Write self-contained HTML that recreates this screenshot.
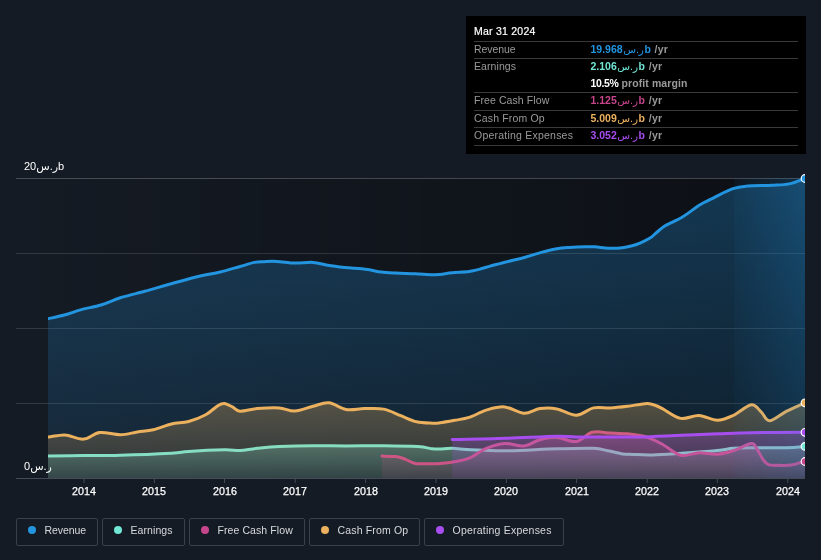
<!DOCTYPE html>
<html><head><meta charset="utf-8"><title>Earnings and Revenue History</title>
<style>
html,body{margin:0;padding:0;background:#151b24;}
body{width:821px;height:560px;position:relative;overflow:hidden;font-family:"Liberation Sans","DejaVu Sans",sans-serif;color:#fff;}
.tt,.lg,.ylab,.yr{will-change:transform;}
.yr{position:absolute;top:483.5px;width:40px;margin-left:-20px;text-align:center;font-size:10.7px;line-height:14px;color:#fff;-webkit-text-stroke:0.25px #fff;}
svg text{font-family:"Liberation Sans","DejaVu Sans",sans-serif;}
.ylab{position:absolute;left:24px;font-size:11px;color:#fff;line-height:12px;white-space:nowrap;}
.lg{position:absolute;top:518px;height:28px;border:1px solid #3a414d;border-radius:2px;box-sizing:border-box;font-size:10.5px;color:#d8dade;white-space:nowrap;}
.lg i{position:absolute;left:11px;top:7px;width:8px;height:8px;border-radius:50%;}
.lg span{position:absolute;left:27.5px;top:2.6px;line-height:16px;}
.tt{position:absolute;left:466px;top:16px;width:340px;height:137.5px;background:#000;font-size:10.5px;}
.tdate{position:absolute;left:8px;top:7.3px;line-height:16px;color:#fff;-webkit-text-stroke:0.2px #fff;}
.sep{position:absolute;left:8px;width:324px;height:1px;background:#3a3a3a;}
.lab{position:absolute;left:8px;line-height:16px;color:#9a9a9a;}
.val{position:absolute;left:124.5px;line-height:16px;white-space:nowrap;font-size:10.5px;}
.val b{font-weight:700}
.u{color:#9a9a9a;font-weight:700;margin-left:0.8px;letter-spacing:0.25px}
.pm{margin-left:0;letter-spacing:0.1px}
.ar{font-weight:400;margin:0 0.5px;}
</style></head><body>
<svg width="821" height="560" viewBox="0 0 821 560" style="position:absolute;left:0;top:0">
<defs>
<clipPath id="cp"><rect x="48" y="160" width="757" height="320"/></clipPath>
<linearGradient id="dark" x1="0" x2="1" y1="0" y2="0"><stop offset="0" stop-color="#000" stop-opacity="0"/><stop offset="1" stop-color="#000" stop-opacity="0.42"/></linearGradient>
<linearGradient id="grev" x1="0" x2="0" y1="0" y2="1"><stop offset="0" stop-color="#2394df" stop-opacity="0.3"/><stop offset="1" stop-color="#2394df" stop-opacity="0.1"/></linearGradient><linearGradient id="gear" x1="0" x2="0" y1="0" y2="1"><stop offset="0" stop-color="#71e7d6" stop-opacity="0.3"/><stop offset="1" stop-color="#71e7d6" stop-opacity="0.1"/></linearGradient><linearGradient id="gfcf" x1="0" x2="0" y1="0" y2="1"><stop offset="0" stop-color="#c7458c" stop-opacity="0.3"/><stop offset="1" stop-color="#c7458c" stop-opacity="0.1"/></linearGradient><linearGradient id="gcfo" x1="0" x2="0" y1="0" y2="1"><stop offset="0" stop-color="#ecb15e" stop-opacity="0.3"/><stop offset="1" stop-color="#ecb15e" stop-opacity="0.1"/></linearGradient><linearGradient id="gopx" x1="0" x2="0" y1="0" y2="1"><stop offset="0" stop-color="#a84df0" stop-opacity="0.3"/><stop offset="1" stop-color="#a84df0" stop-opacity="0.1"/></linearGradient>
<linearGradient id="hl" x1="734" x2="805" y1="0" y2="0" gradientUnits="userSpaceOnUse"><stop offset="0" stop-color="#2394df" stop-opacity="0.05"/><stop offset="1" stop-color="#2394df" stop-opacity="0.24"/></linearGradient>
<linearGradient id="hlm" x1="0" x2="0" y1="178" y2="478" gradientUnits="userSpaceOnUse"><stop offset="0" stop-color="#fff" stop-opacity="1"/><stop offset="1" stop-color="#fff" stop-opacity="0.6"/></linearGradient>
<mask id="hlmask"><rect x="734" y="178" width="71" height="300" fill="url(#hlm)"/></mask>
</defs>
<rect x="16" y="178" width="789" height="300" fill="url(#dark)"/>
<line x1="16" x2="805" y1="178.5" y2="178.5" stroke="#fff" stroke-opacity="0.22" stroke-width="1"/>
<line x1="16" x2="805" y1="253.5" y2="253.5" stroke="#fff" stroke-opacity="0.13" stroke-width="1"/>
<line x1="16" x2="805" y1="328.5" y2="328.5" stroke="#fff" stroke-opacity="0.13" stroke-width="1"/>
<line x1="16" x2="805" y1="403.5" y2="403.5" stroke="#fff" stroke-opacity="0.13" stroke-width="1"/>
<g clip-path="url(#cp)">
<path d="M48.0,318.7C50.7,318.1 58.8,316.5 64.4,315.0C70.0,313.5 75.3,311.3 81.4,309.6C87.5,307.9 94.5,307.0 101.0,305.0C107.5,303.0 113.1,300.1 120.4,297.8C127.7,295.5 137.1,293.4 144.8,291.3C152.5,289.2 159.0,287.2 166.7,285.0C174.4,282.8 184.6,279.9 191.0,278.2C197.4,276.5 200.1,276.0 205.0,275.0C209.9,274.0 214.5,273.4 220.3,272.0C226.1,270.6 234.3,268.1 240.0,266.5C245.7,264.9 250.5,263.2 254.6,262.4C258.7,261.6 260.8,261.9 264.4,261.7C268.0,261.5 271.4,261.2 276.5,261.4C281.6,261.6 288.7,262.9 294.8,263.1C300.9,263.3 307.5,262.0 313.0,262.4C318.5,262.8 322.4,264.4 327.7,265.3C333.0,266.2 339.0,266.9 344.7,267.5C350.4,268.1 357.3,268.2 361.8,268.7C366.3,269.1 368.2,269.6 371.5,270.2C374.8,270.8 377.2,271.6 381.3,272.1C385.4,272.6 390.2,272.8 395.9,273.1C401.6,273.4 409.3,273.5 415.4,273.8C421.5,274.1 428.3,274.7 432.4,274.8C436.5,274.9 436.7,274.7 440.0,274.4C443.3,274.1 447.3,273.3 452.2,272.8C457.1,272.3 464.7,272.0 469.2,271.4C473.7,270.8 474.5,270.5 479.0,269.4C483.5,268.2 490.3,266.0 496.0,264.5C501.7,263.0 508.2,261.4 513.1,260.2C518.0,259.0 520.4,258.6 525.3,257.2C530.2,255.8 537.0,253.5 542.3,252.1C547.6,250.7 552.4,249.5 556.9,248.7C561.4,247.9 564.2,247.8 569.1,247.5C574.0,247.2 581.9,246.9 586.2,246.8C590.5,246.7 591.1,246.6 594.7,246.8C598.4,247.0 603.8,248.0 608.1,248.2C612.4,248.4 616.4,248.4 620.3,248.0C624.2,247.6 628.0,246.8 631.2,246.0C634.5,245.2 636.9,244.4 640.0,243.1C643.1,241.8 647.3,239.8 650.0,238.1C652.7,236.4 653.7,234.9 656.0,233.0C658.3,231.1 661.3,228.4 664.0,226.6C666.7,224.8 669.1,223.9 672.0,222.4C674.9,220.9 678.2,219.5 681.2,217.8C684.2,216.0 686.9,214.1 690.0,211.9C693.1,209.7 696.1,207.1 700.0,204.8C703.9,202.4 708.1,200.5 713.6,197.8C719.1,195.1 727.3,190.6 733.0,188.7C738.7,186.8 741.2,186.7 747.7,186.1C754.2,185.5 765.1,185.7 772.0,185.3C778.9,184.9 783.6,185.0 789.1,183.9C794.6,182.8 802.4,179.4 805.0,178.5L805.0,478L48.0,478Z" fill="url(#grev)"/>
<path d="M48.0,318.7C50.7,318.1 58.8,316.5 64.4,315.0C70.0,313.5 75.3,311.3 81.4,309.6C87.5,307.9 94.5,307.0 101.0,305.0C107.5,303.0 113.1,300.1 120.4,297.8C127.7,295.5 137.1,293.4 144.8,291.3C152.5,289.2 159.0,287.2 166.7,285.0C174.4,282.8 184.6,279.9 191.0,278.2C197.4,276.5 200.1,276.0 205.0,275.0C209.9,274.0 214.5,273.4 220.3,272.0C226.1,270.6 234.3,268.1 240.0,266.5C245.7,264.9 250.5,263.2 254.6,262.4C258.7,261.6 260.8,261.9 264.4,261.7C268.0,261.5 271.4,261.2 276.5,261.4C281.6,261.6 288.7,262.9 294.8,263.1C300.9,263.3 307.5,262.0 313.0,262.4C318.5,262.8 322.4,264.4 327.7,265.3C333.0,266.2 339.0,266.9 344.7,267.5C350.4,268.1 357.3,268.2 361.8,268.7C366.3,269.1 368.2,269.6 371.5,270.2C374.8,270.8 377.2,271.6 381.3,272.1C385.4,272.6 390.2,272.8 395.9,273.1C401.6,273.4 409.3,273.5 415.4,273.8C421.5,274.1 428.3,274.7 432.4,274.8C436.5,274.9 436.7,274.7 440.0,274.4C443.3,274.1 447.3,273.3 452.2,272.8C457.1,272.3 464.7,272.0 469.2,271.4C473.7,270.8 474.5,270.5 479.0,269.4C483.5,268.2 490.3,266.0 496.0,264.5C501.7,263.0 508.2,261.4 513.1,260.2C518.0,259.0 520.4,258.6 525.3,257.2C530.2,255.8 537.0,253.5 542.3,252.1C547.6,250.7 552.4,249.5 556.9,248.7C561.4,247.9 564.2,247.8 569.1,247.5C574.0,247.2 581.9,246.9 586.2,246.8C590.5,246.7 591.1,246.6 594.7,246.8C598.4,247.0 603.8,248.0 608.1,248.2C612.4,248.4 616.4,248.4 620.3,248.0C624.2,247.6 628.0,246.8 631.2,246.0C634.5,245.2 636.9,244.4 640.0,243.1C643.1,241.8 647.3,239.8 650.0,238.1C652.7,236.4 653.7,234.9 656.0,233.0C658.3,231.1 661.3,228.4 664.0,226.6C666.7,224.8 669.1,223.9 672.0,222.4C674.9,220.9 678.2,219.5 681.2,217.8C684.2,216.0 686.9,214.1 690.0,211.9C693.1,209.7 696.1,207.1 700.0,204.8C703.9,202.4 708.1,200.5 713.6,197.8C719.1,195.1 727.3,190.6 733.0,188.7C738.7,186.8 741.2,186.7 747.7,186.1C754.2,185.5 765.1,185.7 772.0,185.3C778.9,184.9 783.6,185.0 789.1,183.9C794.6,182.8 802.4,179.4 805.0,178.5" fill="none" stroke="#2394df" stroke-width="3" stroke-linejoin="round" stroke-linecap="round"/>
<path d="M48.0,456.1C54.0,456.0 71.7,455.8 83.8,455.6C95.9,455.5 105.8,455.6 120.4,455.2C135.0,454.8 160.1,453.8 171.5,453.2C182.9,452.6 179.8,452.1 188.6,451.5C197.4,450.9 215.8,450.0 224.4,449.8C233.0,449.6 234.6,450.8 240.0,450.5C245.4,450.2 250.5,448.9 257.0,448.3C263.5,447.7 269.7,447.0 279.0,446.6C288.3,446.2 301.8,445.8 313.0,445.7C324.2,445.6 334.2,445.9 346.0,445.9C357.8,445.9 371.7,445.6 383.7,445.7C395.7,445.8 409.7,446.1 417.8,446.6C425.9,447.1 428.7,448.4 432.4,448.8C436.1,449.2 436.7,449.1 440.0,449.0C443.3,448.9 446.9,448.2 452.2,448.3C457.5,448.4 462.8,449.4 471.7,449.8C480.6,450.2 491.6,451.0 505.8,450.8C520.0,450.6 542.3,449.2 556.9,448.8C571.5,448.4 585.0,448.0 593.5,448.3C602.0,448.6 603.1,449.9 608.0,450.8C612.9,451.7 618.5,453.3 622.7,453.9C626.9,454.5 628.2,454.2 633.2,454.4C638.2,454.6 644.6,455.1 652.7,454.9C660.8,454.7 671.1,453.9 681.9,453.2C692.6,452.5 708.7,451.3 717.2,450.5C725.7,449.7 727.4,448.8 733.1,448.3C738.8,447.9 742.4,447.9 751.3,447.8C760.2,447.7 777.8,448.0 786.7,447.8C795.7,447.6 802.0,446.6 805.0,446.4L805.0,478L48.0,478Z" fill="url(#gear)"/>
<path d="M48.0,456.1C54.0,456.0 71.7,455.8 83.8,455.6C95.9,455.5 105.8,455.6 120.4,455.2C135.0,454.8 160.1,453.8 171.5,453.2C182.9,452.6 179.8,452.1 188.6,451.5C197.4,450.9 215.8,450.0 224.4,449.8C233.0,449.6 234.6,450.8 240.0,450.5C245.4,450.2 250.5,448.9 257.0,448.3C263.5,447.7 269.7,447.0 279.0,446.6C288.3,446.2 301.8,445.8 313.0,445.7C324.2,445.6 334.2,445.9 346.0,445.9C357.8,445.9 371.7,445.6 383.7,445.7C395.7,445.8 409.7,446.1 417.8,446.6C425.9,447.1 428.7,448.4 432.4,448.8C436.1,449.2 436.7,449.1 440.0,449.0C443.3,448.9 446.9,448.2 452.2,448.3C457.5,448.4 462.8,449.4 471.7,449.8C480.6,450.2 491.6,451.0 505.8,450.8C520.0,450.6 542.3,449.2 556.9,448.8C571.5,448.4 585.0,448.0 593.5,448.3C602.0,448.6 603.1,449.9 608.0,450.8C612.9,451.7 618.5,453.3 622.7,453.9C626.9,454.5 628.2,454.2 633.2,454.4C638.2,454.6 644.6,455.1 652.7,454.9C660.8,454.7 671.1,453.9 681.9,453.2C692.6,452.5 708.7,451.3 717.2,450.5C725.7,449.7 727.4,448.8 733.1,448.3C738.8,447.9 742.4,447.9 751.3,447.8C760.2,447.7 777.8,448.0 786.7,447.8C795.7,447.6 802.0,446.6 805.0,446.4" fill="none" stroke="#71e7d6" stroke-width="3" stroke-linejoin="round" stroke-linecap="round"/>
<path d="M382.0,456.1C384.3,456.2 392.0,456.1 395.9,456.6C399.8,457.1 402.4,458.2 405.6,459.3C408.9,460.4 410.9,462.7 415.4,463.4C419.9,464.1 428.3,463.7 432.4,463.7C436.5,463.7 436.3,463.8 440.0,463.5C443.7,463.2 449.7,462.6 454.6,461.7C459.5,460.8 463.9,460.3 469.2,458.1C474.5,455.9 480.4,450.8 486.3,448.3C492.2,445.9 498.3,443.8 504.6,443.4C510.9,443.0 518.1,446.6 524.0,446.0C529.9,445.4 534.4,441.2 539.9,439.8C545.4,438.4 550.8,437.1 556.9,437.4C563.0,437.7 570.5,442.4 576.4,441.5C582.3,440.6 586.5,433.7 592.2,432.3C597.9,430.9 604.6,432.8 610.5,433.0C616.4,433.2 622.7,433.3 627.6,433.7C632.5,434.1 636.6,434.8 640.0,435.4C643.4,436.0 644.1,435.9 647.8,437.4C651.5,438.9 656.9,441.2 662.4,444.2C667.9,447.2 674.6,453.8 680.7,455.2C686.8,456.6 692.9,452.9 699.0,452.7C705.1,452.5 711.5,454.5 717.2,454.2C722.9,453.9 727.4,452.6 733.1,450.8C738.8,449.0 747.3,443.8 751.3,443.5C755.3,443.2 755.0,446.3 757.0,449.0C759.0,451.7 761.1,456.9 763.0,459.5C764.9,462.1 766.0,463.6 768.5,464.6C771.0,465.6 774.2,465.2 778.0,465.3C781.8,465.4 786.5,465.7 791.0,465.0C795.5,464.3 802.7,461.9 805.0,461.3L805.0,478L382.0,478Z" fill="url(#gfcf)"/>
<path d="M382.0,456.1C384.3,456.2 392.0,456.1 395.9,456.6C399.8,457.1 402.4,458.2 405.6,459.3C408.9,460.4 410.9,462.7 415.4,463.4C419.9,464.1 428.3,463.7 432.4,463.7C436.5,463.7 436.3,463.8 440.0,463.5C443.7,463.2 449.7,462.6 454.6,461.7C459.5,460.8 463.9,460.3 469.2,458.1C474.5,455.9 480.4,450.8 486.3,448.3C492.2,445.9 498.3,443.8 504.6,443.4C510.9,443.0 518.1,446.6 524.0,446.0C529.9,445.4 534.4,441.2 539.9,439.8C545.4,438.4 550.8,437.1 556.9,437.4C563.0,437.7 570.5,442.4 576.4,441.5C582.3,440.6 586.5,433.7 592.2,432.3C597.9,430.9 604.6,432.8 610.5,433.0C616.4,433.2 622.7,433.3 627.6,433.7C632.5,434.1 636.6,434.8 640.0,435.4C643.4,436.0 644.1,435.9 647.8,437.4C651.5,438.9 656.9,441.2 662.4,444.2C667.9,447.2 674.6,453.8 680.7,455.2C686.8,456.6 692.9,452.9 699.0,452.7C705.1,452.5 711.5,454.5 717.2,454.2C722.9,453.9 727.4,452.6 733.1,450.8C738.8,449.0 747.3,443.8 751.3,443.5C755.3,443.2 755.0,446.3 757.0,449.0C759.0,451.7 761.1,456.9 763.0,459.5C764.9,462.1 766.0,463.6 768.5,464.6C771.0,465.6 774.2,465.2 778.0,465.3C781.8,465.4 786.5,465.7 791.0,465.0C795.5,464.3 802.7,461.9 805.0,461.3" fill="none" stroke="#c7458c" stroke-width="3" stroke-linejoin="round" stroke-linecap="round"/>
<path d="M48.0,437.1C49.5,436.9 53.9,436.0 57.0,435.7C60.1,435.4 62.3,434.6 66.8,435.2C71.3,435.8 78.3,439.6 83.8,439.1C89.3,438.7 93.6,433.2 99.7,432.5C105.8,431.8 114.1,434.8 120.4,434.7C126.7,434.6 131.9,432.8 137.4,432.0C142.9,431.2 147.6,431.1 153.3,429.8C159.0,428.5 165.6,425.4 171.5,424.0C177.4,422.6 182.9,423.1 188.6,421.5C194.3,419.9 200.8,417.3 205.7,414.7C210.6,412.1 214.7,407.6 217.8,405.7C220.9,403.8 222.0,403.3 224.4,403.5C226.8,403.7 229.8,405.6 232.4,406.9C235.0,408.2 235.9,410.9 240.0,411.2C244.1,411.5 250.5,409.2 257.0,408.6C263.5,408.1 272.7,407.5 279.0,407.9C285.3,408.3 289.1,411.4 294.8,411.1C300.5,410.8 307.4,407.6 313.1,406.2C318.8,404.8 323.4,402.3 328.9,402.8C334.4,403.3 340.1,408.4 346.0,409.4C351.9,410.4 357.9,408.7 364.2,408.6C370.5,408.6 377.6,407.9 383.7,409.1C389.8,410.3 395.3,413.6 400.8,415.7C406.3,417.8 411.3,420.6 416.6,421.8C421.9,423.1 428.5,423.0 432.4,423.2C436.3,423.4 436.3,423.3 440.0,422.8C443.7,422.3 449.7,421.2 454.6,420.3C459.5,419.4 463.9,419.1 469.2,417.4C474.5,415.7 480.4,411.9 486.3,410.1C492.2,408.4 498.3,406.4 504.6,406.9C510.9,407.4 518.1,413.0 524.0,413.3C529.9,413.6 534.4,409.3 539.9,408.6C545.4,407.9 550.8,407.8 556.9,408.9C563.0,410.0 570.3,415.4 576.4,415.2C582.5,415.0 587.8,409.1 593.5,407.9C599.2,406.7 604.8,408.2 610.5,407.9C616.2,407.6 622.7,406.8 627.6,406.2C632.5,405.6 636.7,404.8 640.0,404.4C643.3,404.0 645.0,403.5 647.5,403.6C650.0,403.8 652.5,404.5 655.0,405.3C657.5,406.1 658.1,406.4 662.4,408.6C666.7,410.8 674.6,417.2 680.7,418.4C686.8,419.5 692.9,415.2 699.0,415.5C705.1,415.8 711.5,420.3 717.2,420.3C722.9,420.3 727.4,418.1 733.1,415.5C738.8,412.9 746.6,405.4 751.3,404.8C756.0,404.2 758.0,409.1 761.1,411.8C764.2,414.5 765.3,420.9 769.6,420.8C773.9,420.7 780.8,414.1 786.7,411.1C792.6,408.1 802.0,404.2 805.0,402.8L805.0,478L48.0,478Z" fill="url(#gcfo)"/>
<path d="M48.0,437.1C49.5,436.9 53.9,436.0 57.0,435.7C60.1,435.4 62.3,434.6 66.8,435.2C71.3,435.8 78.3,439.6 83.8,439.1C89.3,438.7 93.6,433.2 99.7,432.5C105.8,431.8 114.1,434.8 120.4,434.7C126.7,434.6 131.9,432.8 137.4,432.0C142.9,431.2 147.6,431.1 153.3,429.8C159.0,428.5 165.6,425.4 171.5,424.0C177.4,422.6 182.9,423.1 188.6,421.5C194.3,419.9 200.8,417.3 205.7,414.7C210.6,412.1 214.7,407.6 217.8,405.7C220.9,403.8 222.0,403.3 224.4,403.5C226.8,403.7 229.8,405.6 232.4,406.9C235.0,408.2 235.9,410.9 240.0,411.2C244.1,411.5 250.5,409.2 257.0,408.6C263.5,408.1 272.7,407.5 279.0,407.9C285.3,408.3 289.1,411.4 294.8,411.1C300.5,410.8 307.4,407.6 313.1,406.2C318.8,404.8 323.4,402.3 328.9,402.8C334.4,403.3 340.1,408.4 346.0,409.4C351.9,410.4 357.9,408.7 364.2,408.6C370.5,408.6 377.6,407.9 383.7,409.1C389.8,410.3 395.3,413.6 400.8,415.7C406.3,417.8 411.3,420.6 416.6,421.8C421.9,423.1 428.5,423.0 432.4,423.2C436.3,423.4 436.3,423.3 440.0,422.8C443.7,422.3 449.7,421.2 454.6,420.3C459.5,419.4 463.9,419.1 469.2,417.4C474.5,415.7 480.4,411.9 486.3,410.1C492.2,408.4 498.3,406.4 504.6,406.9C510.9,407.4 518.1,413.0 524.0,413.3C529.9,413.6 534.4,409.3 539.9,408.6C545.4,407.9 550.8,407.8 556.9,408.9C563.0,410.0 570.3,415.4 576.4,415.2C582.5,415.0 587.8,409.1 593.5,407.9C599.2,406.7 604.8,408.2 610.5,407.9C616.2,407.6 622.7,406.8 627.6,406.2C632.5,405.6 636.7,404.8 640.0,404.4C643.3,404.0 645.0,403.5 647.5,403.6C650.0,403.8 652.5,404.5 655.0,405.3C657.5,406.1 658.1,406.4 662.4,408.6C666.7,410.8 674.6,417.2 680.7,418.4C686.8,419.5 692.9,415.2 699.0,415.5C705.1,415.8 711.5,420.3 717.2,420.3C722.9,420.3 727.4,418.1 733.1,415.5C738.8,412.9 746.6,405.4 751.3,404.8C756.0,404.2 758.0,409.1 761.1,411.8C764.2,414.5 765.3,420.9 769.6,420.8C773.9,420.7 780.8,414.1 786.7,411.1C792.6,408.1 802.0,404.2 805.0,402.8" fill="none" stroke="#ecb15e" stroke-width="3" stroke-linejoin="round" stroke-linecap="round"/>
<path d="M452.2,439.6C461.1,439.4 488.4,438.9 505.8,438.3C523.2,437.7 545.1,436.4 556.9,436.2C568.7,436.0 567.5,436.8 576.4,436.9C585.3,437.0 599.9,437.1 610.5,437.1C621.1,437.1 628.1,437.2 640.0,436.9C651.9,436.6 668.8,435.7 681.9,435.2C695.0,434.7 706.8,434.1 718.4,433.7C730.0,433.3 736.9,432.9 751.3,432.7C765.7,432.5 796.0,432.4 805.0,432.3L805.0,478L452.2,478Z" fill="url(#gopx)"/>
<path d="M452.2,439.6C461.1,439.4 488.4,438.9 505.8,438.3C523.2,437.7 545.1,436.4 556.9,436.2C568.7,436.0 567.5,436.8 576.4,436.9C585.3,437.0 599.9,437.1 610.5,437.1C621.1,437.1 628.1,437.2 640.0,436.9C651.9,436.6 668.8,435.7 681.9,435.2C695.0,434.7 706.8,434.1 718.4,433.7C730.0,433.3 736.9,432.9 751.3,432.7C765.7,432.5 796.0,432.4 805.0,432.3" fill="none" stroke="#a84df0" stroke-width="3" stroke-linejoin="round" stroke-linecap="round"/>
<rect x="734" y="178" width="71" height="300" fill="url(#hl)" mask="url(#hlmask)"/>
<circle cx="805" cy="178.5" r="3.8" fill="#2394df" stroke="#fff" stroke-width="1.2"/>
<circle cx="805" cy="402.8" r="3.8" fill="#ecb15e" stroke="#fff" stroke-width="1.2"/>
<circle cx="805" cy="432.3" r="3.8" fill="#a84df0" stroke="#fff" stroke-width="1.2"/>
<circle cx="805" cy="446.4" r="3.8" fill="#71e7d6" stroke="#fff" stroke-width="1.2"/>
<circle cx="805" cy="461.5" r="3.8" fill="#c7458c" stroke="#fff" stroke-width="1.2"/>
</g>
<line x1="16" x2="805" y1="478.5" y2="478.5" stroke="#454c58" stroke-width="1"/>
<line x1="84" x2="84" y1="478" y2="483" stroke="#454c58" stroke-width="1"/>
<line x1="154.4" x2="154.4" y1="478" y2="483" stroke="#454c58" stroke-width="1"/>
<line x1="224.5" x2="224.5" y1="478" y2="483" stroke="#454c58" stroke-width="1"/>
<line x1="295.2" x2="295.2" y1="478" y2="483" stroke="#454c58" stroke-width="1"/>
<line x1="365.6" x2="365.6" y1="478" y2="483" stroke="#454c58" stroke-width="1"/>
<line x1="436" x2="436" y1="478" y2="483" stroke="#454c58" stroke-width="1"/>
<line x1="506.4" x2="506.4" y1="478" y2="483" stroke="#454c58" stroke-width="1"/>
<line x1="576.6" x2="576.6" y1="478" y2="483" stroke="#454c58" stroke-width="1"/>
<line x1="647.2" x2="647.2" y1="478" y2="483" stroke="#454c58" stroke-width="1"/>
<line x1="717.3" x2="717.3" y1="478" y2="483" stroke="#454c58" stroke-width="1"/>
<line x1="787.8" x2="787.8" y1="478" y2="483" stroke="#454c58" stroke-width="1"/>
</svg>
<div class="ylab" style="top:160px">20<span>ر.س</span>b</div>
<div class="ylab" style="top:460px">0<span>ر.س</span></div>
<div class="yr" style="left:84px">2014</div>
<div class="yr" style="left:154.4px">2015</div>
<div class="yr" style="left:224.5px">2016</div>
<div class="yr" style="left:295.2px">2017</div>
<div class="yr" style="left:365.6px">2018</div>
<div class="yr" style="left:436px">2019</div>
<div class="yr" style="left:506.4px">2020</div>
<div class="yr" style="left:576.6px">2021</div>
<div class="yr" style="left:647.2px">2022</div>
<div class="yr" style="left:717.3px">2023</div>
<div class="yr" style="left:787.8px">2024</div>
<div class="lg" style="left:16px;width:82px"><i style="background:#2394df"></i><span style="letter-spacing:-0.092px">Revenue</span></div>
<div class="lg" style="left:102px;width:83px"><i style="background:#71e7d6"></i><span style="letter-spacing:0.081px">Earnings</span></div>
<div class="lg" style="left:189px;width:115.5px"><i style="background:#c7458c"></i><span style="letter-spacing:0.085px">Free Cash Flow</span></div>
<div class="lg" style="left:309px;width:110.5px"><i style="background:#ecb15e"></i><span style="letter-spacing:0.16px">Cash From Op</span></div>
<div class="lg" style="left:424px;width:139.5px"><i style="background:#a84df0"></i><span style="letter-spacing:0.223px">Operating Expenses</span></div>
<div class="tt"><div class="tdate" style="letter-spacing:0.236px">Mar 31 2024</div>
<div class="sep" style="top:25px"></div><div class="lab" style="top:25.0px;letter-spacing:-0.092px">Revenue</div><div class="val" style="top:25.0px;color:#2394df"><b>19.968<span class="ar">ر.س</span>b</b> <span class="u">/yr</span></div>
<div class="sep" style="top:42px"></div><div class="lab" style="top:42.1px;letter-spacing:0.081px">Earnings</div><div class="val" style="top:42.1px;color:#71e7d6"><b>2.106<span class="ar">ر.س</span>b</b> <span class="u">/yr</span></div>
<div class="sep" style="top:76px"></div><div class="lab" style="top:76.1px;letter-spacing:0.085px">Free Cash Flow</div><div class="val" style="top:76.1px;color:#c7458c"><b>1.125<span class="ar">ر.س</span>b</b> <span class="u">/yr</span></div>
<div class="sep" style="top:94px"></div><div class="lab" style="top:93.5px;letter-spacing:0.16px">Cash From Op</div><div class="val" style="top:93.5px;color:#ecb15e"><b>5.009<span class="ar">ر.س</span>b</b> <span class="u">/yr</span></div>
<div class="sep" style="top:111px"></div><div class="lab" style="top:110.8px;letter-spacing:0.223px">Operating Expenses</div><div class="val" style="top:110.8px;color:#a84df0"><b>3.052<span class="ar">ر.س</span>b</b> <span class="u">/yr</span></div>
<div class="val" style="top:58.7px;color:#fff"><b style="letter-spacing:-0.35px">10.5%</b> <span class="u pm">profit margin</span></div>
<div class="sep" style="top:129px"></div></div>
</body></html>
